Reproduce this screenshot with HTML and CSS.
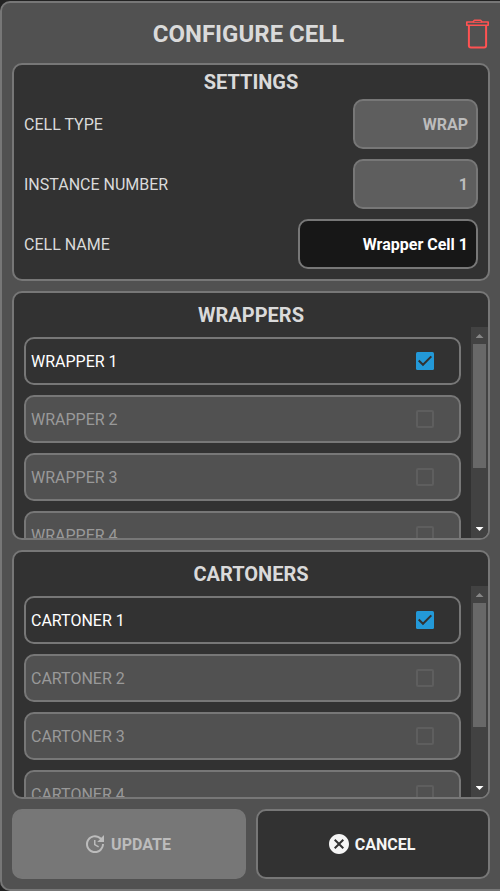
FILE: index.html
```html
<!DOCTYPE html>
<html lang="en">
<head>
<meta charset="utf-8">
<title>Configure Cell</title>
<link rel="stylesheet" href="styles.css">
</head>
<body>
<main class="dialog">
  <header class="header">
    <h1>CONFIGURE CELL</h1>
    <svg class="trash" viewBox="0 0 24 30" fill="none" stroke="#ff5252" stroke-width="2" stroke-linejoin="round"><path d="M.8 3h6l1.700-1.800h6L16.200 3h6v3.200H.8z" stroke-width="1.600"/><path d="M7 3.300h9" stroke-width="1"/><path d="M2.900 6.500v20q0 2 2 2h13.200q2 0 2-2v-20"/></svg>
  </header>
  <section class="panel settings">
    <h2>SETTINGS</h2>
    <div class="field"><span>CELL TYPE</span><div class="input disabled">WRAP</div></div>
    <div class="field"><span>INSTANCE NUMBER</span><div class="input disabled">1</div></div>
    <div class="field"><span>CELL NAME</span><div class="input name">Wrapper Cell 1</div></div>
  </section>
  <section class="panel machines">
    <h2>WRAPPERS</h2>
    <div class="scroll">
      <div class="list">
        <div class="row on"><span>WRAPPER 1</span><svg class="box" viewBox="0 0 18 18"><rect width="18" height="18" rx="1.500" fill="#2399d8"/><path d="M2.700 8.500l4.300 4.300 8.300-8.400" fill="none" stroke="#323232" stroke-width="2"/></svg></div>
        <div class="row"><span>WRAPPER 2</span><i class="box empty"></i></div>
        <div class="row"><span>WRAPPER 3</span><i class="box empty"></i></div>
        <div class="row"><span>WRAPPER 4</span><i class="box empty"></i></div>
      </div>
      <div class="bar"><i class="up"></i><i class="thumb"></i><i class="down"></i></div>
    </div>
  </section>
  <section class="panel machines">
    <h2>CARTONERS</h2>
    <div class="scroll">
      <div class="list">
        <div class="row on"><span>CARTONER 1</span><svg class="box" viewBox="0 0 18 18"><rect width="18" height="18" rx="1.500" fill="#2399d8"/><path d="M2.700 8.500l4.300 4.300 8.300-8.400" fill="none" stroke="#323232" stroke-width="2"/></svg></div>
        <div class="row"><span>CARTONER 2</span><i class="box empty"></i></div>
        <div class="row"><span>CARTONER 3</span><i class="box empty"></i></div>
        <div class="row"><span>CARTONER 4</span><i class="box empty"></i></div>
      </div>
      <div class="bar"><i class="up"></i><i class="thumb"></i><i class="down"></i></div>
    </div>
  </section>
  <footer class="actions">
    <div class="button update"><svg viewBox="0 0 24 24" fill="currentColor"><path d="M21 10.120h-6.780l2.740-2.820c-2.730-2.700-7.150-2.800-9.880-.100-2.730 2.710-2.730 7.080 0 9.790s7.150 2.710 9.880 0C18.320 15.650 19 14.080 19 12.100h2c0 1.980-.880 4.550-2.640 6.290-3.510 3.480-9.210 3.480-12.720 0-3.500-3.470-3.530-9.110-.020-12.580s9.140-3.470 12.650 0L21 3v7.120zM12.500 8v4.250l3.500 2.080-.720 1.210L11 13V8h1.500z"/></svg><span>UPDATE</span></div>
    <div class="button cancel"><svg viewBox="0 0 24 24" fill="currentColor"><path d="M12 2C6.470 2 2 6.470 2 12s4.470 10 10 10 10-4.470 10-10S17.530 2 12 2zm5 13.590L15.590 17 12 13.410 8.410 17 7 15.590 10.590 12 7 8.410 8.410 7 12 10.590 15.590 7 17 8.410 13.410 12 17 15.590z"/></svg><span>CANCEL</span></div>
  </footer>
</main>
</body>
</html>
```
FILE: styles.css
```css
* { box-sizing: border-box; }
body {
  margin: 0;
  padding-top: 1px;
  height: 891px;
  overflow: hidden;
  background: #222;
  color: #dadada;
  font: 16px/24px Roboto, sans-serif;
}
.dialog {
  height: 890px;
  padding: 0 10px;
  border: 2px solid #777;
  border-right: 0;
  border-radius: 10px 0 0 10px;
  background: #515151;
  display: flex;
  flex-direction: column;
  gap: 10px;
}
h1, h2 { margin: 0; font-weight: 700; text-align: center; }
h1 { font-size: 24px; line-height: 62px; padding-right: 5px; }
h2 { font-size: 20px; line-height: 34px; height: 34px; }
.header { position: relative; height: 60px; margin-bottom: -10px; }
.trash { position: absolute; right: 0; top: 16px; width: 24px; height: 30px; }
.panel {
  border: 2px solid #777;
  border-radius: 10px;
  background: #323232;
  overflow: hidden;
}
.settings { height: 218px; padding: 0 10px; }
.settings .field + .field { margin-top: 10px; }
.field { display: flex; align-items: center; justify-content: space-between; }
.field span, .row span, .button span { padding-top: 2px; }
.input {
  width: 125px;
  height: 50px;
  border: 2px solid #777;
  border-radius: 10px;
  padding-right: 8px;
  line-height: 48px;
  text-align: right;
  font-weight: 700;
}
.disabled { background: #5e5e5e; color: #bcbcbc; }
.name { width: 180px; background: #171717; color: #fff; }
.machines { height: 249px; }
.machines h2 { line-height: 44px; }
.scroll { display: flex; height: 211px; overflow: hidden; }
.list { flex: 1; padding: 10px; display: flex; flex-direction: column; gap: 10px; }
.row {
  flex: none;
  height: 48px;
  border: 2px solid #777;
  border-radius: 10px;
  padding: 0 25px 0 5px;
  display: flex;
  align-items: center;
  justify-content: space-between;
  background: #515151;
  color: #999;
}
.row.on { background: #323232; color: #fff; }
.box { width: 18px; height: 18px; display: block; }
.empty { border: 2px solid #5e5e5e; border-radius: 2px; }
.bar {
  width: 17px;
  background: #424242;
  display: flex;
  flex-direction: column;
  align-items: center;
}
.up, .down { width: 8px; height: 4px; }
.up { background: #868686; clip-path: polygon(50% 0, 100% 100%, 0 100%); margin: 7px 0 6px; }
.thumb { width: 13px; height: 124px; background: #686868; }
.down { background: #fff; clip-path: polygon(0 0, 100% 0, 50% 100%); margin-top: 59px; }
.actions { display: grid; grid-template-columns: 1fr 1fr; gap: 10px; height: 70px; }
.dialog > .header, .panel, .actions { width: 478px; flex: none; }
.button {
  border: 2px solid #777;
  border-radius: 10px;
  display: flex;
  align-items: center;
  justify-content: center;
  padding-right: 4px;
  font-weight: 700;
}
.button svg { width: 24px; height: 24px; margin-right: 4px; }
.update { background: #777; color: #bcbcbc; }
.cancel { background: #323232; color: #f5f5f5; }
```
